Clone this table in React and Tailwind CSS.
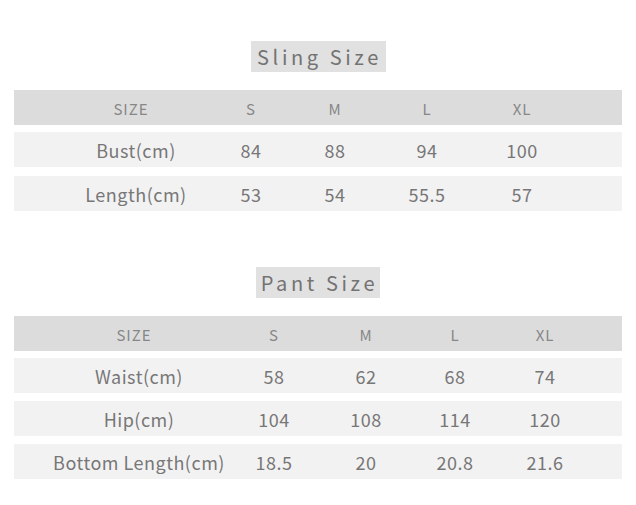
const SLING = {
  title: 'Sling Size',
  cols: 'grid-cols-[220px_34px_134px_50px_140px_30px]',
  rows: [
    ['Bust(cm)', '84', '88', '94', '100'],
    ['Length(cm)', '53', '54', '55.5', '57'],
  ],
};

const PANT = {
  title: 'Pant Size',
  cols: 'grid-cols-[226px_68px_116px_62px_118px_16px]',
  rows: [
    ['Waist(cm)', '58', '62', '68', '74'],
    ['Hip(cm)', '104', '108', '114', '120'],
    ['Bottom Length(cm)', '18.5', '20', '20.8', '21.6'],
  ],
};

function SizeTable({ title, cols, rows, titleW, rowGap }) {
  return (
    <section className="flex flex-col items-center">
      <div className={`h-[31px] ${titleW} bg-[#e1e1e1] flex items-center justify-center pl-[3px] text-[20px] tracking-[3.6px] text-[#737373]`}>
        {title}
      </div>

      {/* header */}
      <div className={`mt-[18px] w-[608px] h-[35px] pt-[3px] bg-[#dcdcdc] grid ${cols} items-center text-[15px] tracking-[1px] text-[#878787]`}>
        <span className="pl-[14px] text-center">SIZE</span>
        <span className="text-center">S</span>
        <span className="text-center">M</span>
        <span className="text-center">L</span>
        <span className="text-center">XL</span>
        <span />
      </div>

      <div className={`mt-[7px] flex flex-col ${rowGap}`}>
        {rows.map((r) => (
          <div key={r[0]} className={`w-[608px] h-[35px] pt-[2px] bg-[#f3f2f3] grid ${cols} items-center text-[18px] tracking-[0.5px] text-[#777777]`}>
            <span className="pl-[24px] text-center whitespace-nowrap">{r[0]}</span>
            {r.slice(1).map((v, i) => (
              <span key={i} className="text-center">{v}</span>
            ))}
            <span />
          </div>
        ))}
      </div>
    </section>
  );
}

export default function App() {
  return (
    <div className="w-[636px] h-[505px] bg-white pt-[41px] font-['Noto_Sans_CJK_SC','Noto_Sans',sans-serif]">
      <SizeTable {...SLING} titleW="w-[135px]" rowGap="gap-[9px]" />
      <div className="h-[56px]" />
      <SizeTable {...PANT} titleW="w-[124px]" rowGap="gap-[8px]" />
    </div>
  );
}
